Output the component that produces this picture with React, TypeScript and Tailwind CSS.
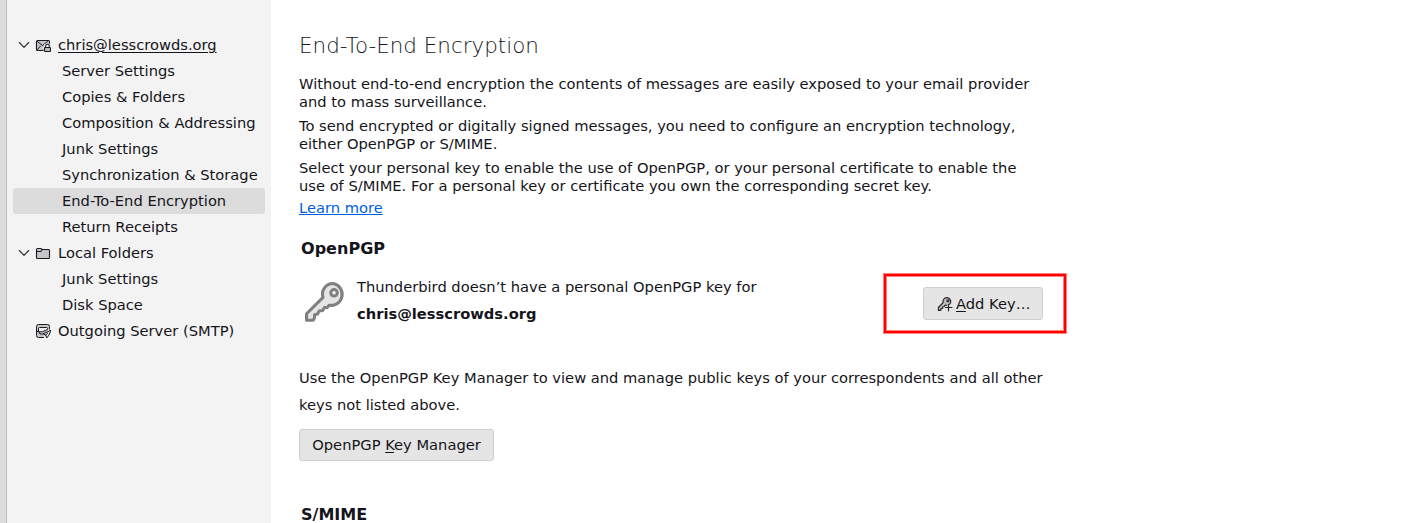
import React from "react";

function Chevron() {
  return (
    <svg className="h-3 w-3 shrink-0" viewBox="0 0 12 12" fill="none" stroke="#303038" strokeWidth="1.15" strokeLinecap="round" strokeLinejoin="round">
      <path d="M1.3 3.5 6 8.3l4.7-4.8" />
    </svg>
  );
}

function MailLockIcon() {
  return (
    <svg className="h-4 w-4 shrink-0" viewBox="0 0 16 16" fill="none" stroke="#1a1a1f" strokeWidth="1.1" strokeLinecap="round" strokeLinejoin="round">
      <path d="M2.5 3.5h11a1 1 0 0 1 1 1v8a1 1 0 0 1-1 1h-11a1 1 0 0 1-1-1v-8a1 1 0 0 1 1-1Z" fill="#c6c6c8" />
      <path d="m2.500 4.500 5 4 5-4M2.500 12.500l3-3.500" strokeWidth="1" />
      <path d="M8.500 9.500h1V6.800h6v8.400h-7Z" fill="#f3f3f3" stroke="none" />
      <path d="M10.700 10.500V9a1.800 1.800 0 0 1 3.600 0v1.500" />
      <rect x="9.500" y="10.500" width="6" height="4" rx=".7" fill="#b9b9bc" />
    </svg>
  );
}

function FolderIcon() {
  return (
    <svg className="h-4 w-4 shrink-0" viewBox="0 0 16 16" fill="none" stroke="#1a1a1f" strokeWidth="1.1" strokeLinecap="round" strokeLinejoin="round">
      <path d="M1.5 12.5v-8a1 1 0 0 1 1-1h3.200l1.800 1h6a1 1 0 0 1 1 1v7a1 1 0 0 1-1 1h-11a1 1 0 0 1-1-1Z" fill="#c6c6c8" />
      <path d="M1.5 6.5h4.200l1.800-2" />
    </svg>
  );
}

function OutgoingIcon() {
  return (
    <svg className="h-4 w-4 shrink-0" viewBox="0 0 16 16" fill="none" stroke="#1a1a1f" strokeWidth="1" strokeLinecap="round" strokeLinejoin="round">
      <path d="M8.500 14.500h-5a2 2 0 0 1-2-2v-9a2 2 0 0 1 2-2h9a2 2 0 0 1 2 2V6" fill="#c6c6c8" />
      <path d="M1.500 8.500h2.300l1.200 2.500h2.500" />
      <path d="M3.500 8.500v-3a1 1 0 0 1 1-1h7a1 1 0 0 1 1 1v1l-4.500 2Z" fill="#f3f3f3" />
      <path d="m15.500 7.500-7.500 3.300 2.700 1.200 1 3 2-2.500Z" fill="#e4e4e6" />
      <path d="m10.700 12 2-1.900" />
    </svg>
  );
}

function KeyIcon() {
  return (
    <svg className="h-[42px] w-[42px] shrink-0" viewBox="0 0 41 41" fill="none" stroke="#808080" strokeWidth="3" strokeLinejoin="round">
      <path d="M28.5 2.500A10.200 10.200 0 0 0 18.600 16L2.500 32v6.400h6.500l1.300-2.500v-3l3-.7 1.500-3 3.500-.4 1.500-2.800 3-.2 1.700-2.200a10.200 10.200 0 1 0 4-21.100Z" fill="#e5e5e5" />
      <circle cx="29.3" cy="11.500" r="3.200" fill="#fff" />
    </svg>
  );
}

function KeyAddIcon() {
  return (
    <svg className="h-4 w-4 shrink-0" viewBox="0 0 16 16" fill="none" stroke="#202024" strokeWidth="1.15" strokeLinecap="round" strokeLinejoin="round">
      <path d="M8.200 9.100A3.900 3.900 0 1 0 6.100 6.600L1.400 11.500v2.800h2.400v-1.600l1.600-.3.400-1.500 1.500-.4Z" fill="#bdbdbf" />
      <circle cx="10.900" cy="4.700" r="1" fill="#e5e5e5" />
      <path d="M11.500 9.700v5M9.700 11.500h5" stroke="#e5e5e5" strokeWidth="3" />
      <path d="M11.500 8.500v6.300M8.500 11.500h6.500" />
    </svg>
  );
}

function Account({ icon, label, expandable = false, underlined = false }: { icon: React.ReactNode; label: string; expandable?: boolean; underlined?: boolean }) {
  return (
    <div className="flex h-[26px] items-center pl-[5px]">
      <span className="mr-[5px] w-3">{expandable && <Chevron />}</span>
      {icon}
      <span className={underlined ? "ml-[7px] underline decoration-1 underline-offset-2 [text-decoration-skip-ink:auto]" : "ml-[7px]"}>{label}</span>
    </div>
  );
}

function Entry({ label, selected = false }: { label: string; selected?: boolean }) {
  return (
    <div className={`flex h-[26px] items-center rounded-[3px] pl-[49px] ${selected ? "bg-[#dcdcdc]" : ""}`}>{label}</div>
  );
}

export default function App() {
  return (
    <div className="flex h-[523px] w-[1409px] overflow-hidden bg-white font-['DejaVu_Sans',sans-serif] text-[14.68px] leading-[18px] text-[#15141a]">
      <div className="w-[7px] shrink-0 border-r border-[#bdbdbd] bg-[#dcdcdc]" />
      <nav className="w-[264px] shrink-0 whitespace-nowrap bg-[#f3f3f3] pt-8 pr-1.5 pl-1.5">
        <Account icon={<MailLockIcon />} label="chris@lesscrowds.org" expandable underlined />
        <Entry label="Server Settings" />
        <Entry label="Copies & Folders" />
        <Entry label="Composition & Addressing" />
        <Entry label="Junk Settings" />
        <Entry label="Synchronization & Storage" />
        <Entry label="End-To-End Encryption" selected />
        <Entry label="Return Receipts" />
        <Account icon={<FolderIcon />} label="Local Folders" expandable />
        <Entry label="Junk Settings" />
        <Entry label="Disk Space" />
        <Account icon={<OutgoingIcon />} label="Outgoing Server (SMTP)" />
      </nav>
      <main className="ml-7 w-[767px] shrink-0 whitespace-nowrap pt-[33px]">
        <h1 className="text-[21.45px] leading-[26px] font-extralight">End-To-End Encryption</h1>
        <div className="mt-4 flex flex-col gap-1.5">
          <p>Without end-to-end encryption the contents of messages are easily exposed to your email provider<br />and to mass surveillance.</p>
          <p>To send encrypted or digitally signed messages, you need to configure an encryption technology,<br />either OpenPGP or S/MIME.</p>
          <p>Select your personal key to enable the use of OpenPGP, or your personal certificate to enable the<br />use of S/MIME. For a personal key or certificate you own the corresponding secret key.</p>
        </div>
        <a className="mt-1 block w-fit text-[#0061e0] underline decoration-1 underline-offset-1">Learn more</a>
        <h2 className="mt-[22px] ml-0.5 text-[16.05px] leading-5 font-bold">OpenPGP</h2>
        <section className="mt-[15px] flex h-[59px] items-start justify-between">
          <div className="-mt-px flex">
            <div className="pt-[8px] pl-[5px]"><KeyIcon /></div>
            <div className="ml-[11px] leading-[27px]">
              <p>Thunderbird doesn’t have a personal OpenPGP key for</p>
              <p className="font-bold">chris@lesscrowds.org</p>
            </div>
          </div>
          <div className="flex h-[59px] w-[182px] items-start border-2 border-[#ff0000] pt-[11px] pl-[37px] shadow-[0_0_0_1px_#ff8080,inset_0_0_0_1px_#ff8080]">
            <button className="flex h-[33px] w-[120px] items-center rounded-[3px] border border-[#cfcfcf] bg-[#e5e5e5] pl-[13px]">
              <KeyAddIcon />
              <span className="ml-[3px] pt-px"><span className="underline decoration-1 underline-offset-2">A</span>dd Key…</span>
            </button>
          </div>
        </section>
        <p className="mt-[31px] leading-[27px]">Use the OpenPGP Key Manager to view and manage public keys of your correspondents and all other<br />keys not listed above.</p>
        <button className="mt-[11px] flex h-8 w-[195px] items-center justify-center rounded-[3px] border border-[#cfcfcf] bg-[#e5e5e5]">
          <span>OpenPGP <span className="underline underline-offset-2">K</span>ey Manager</span>
        </button>
        <h2 className="mt-[44px] ml-0.5 text-[16.05px] leading-5 font-bold">S/MIME</h2>
      </main>
    </div>
  );
}
